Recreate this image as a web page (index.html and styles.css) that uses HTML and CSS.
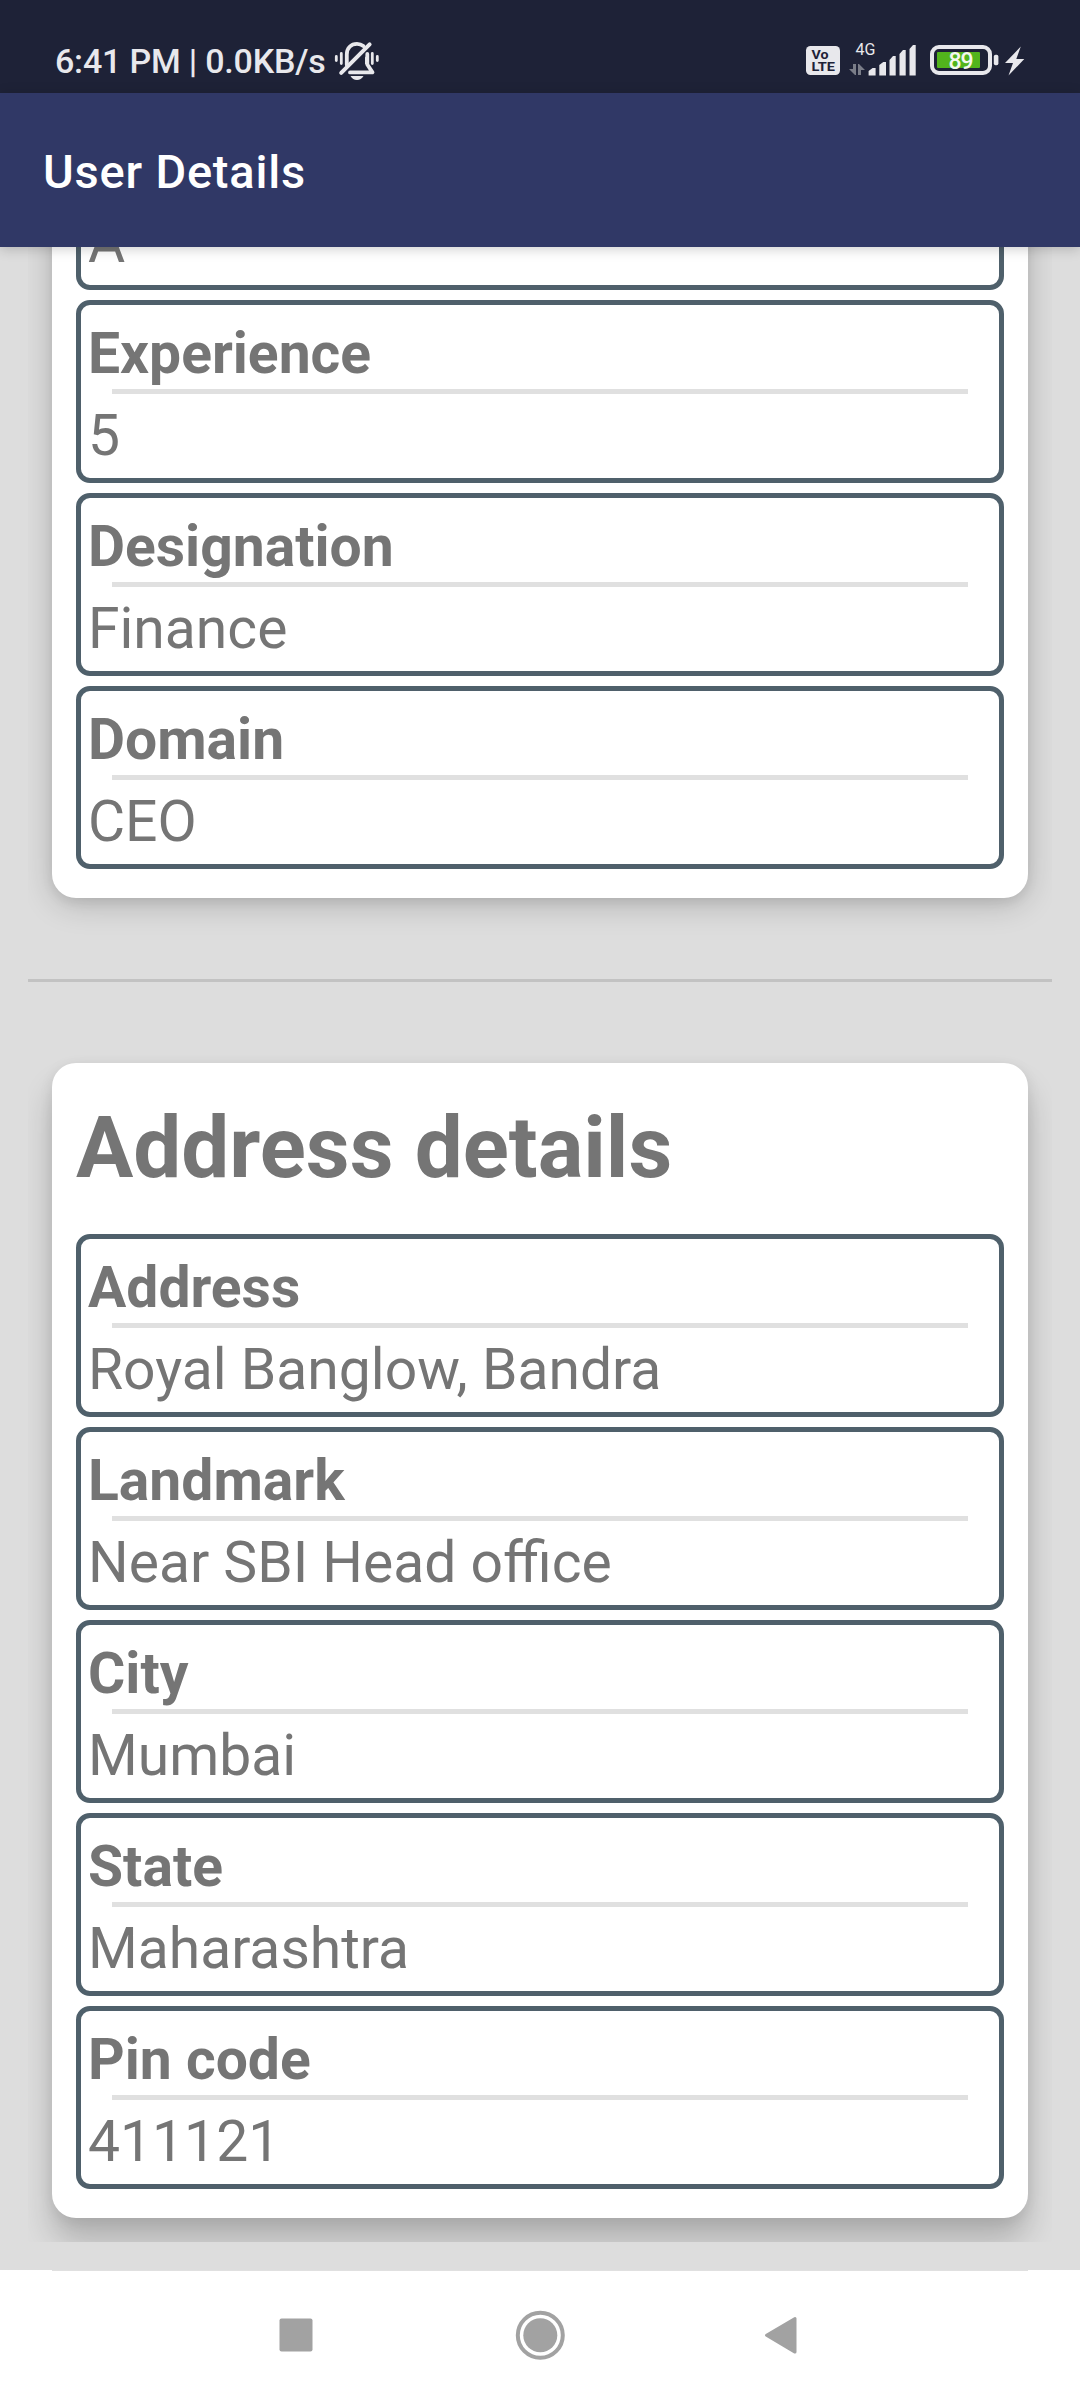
FILE: index.html
```html
<!DOCTYPE html>
<html lang="en">
<head>
<meta charset="utf-8">
<title>User Details</title>
<link rel="stylesheet" href="styles.css">
</head>
<body>
<div class="screen">
  <header class="status">
    <span class="clock">6:41 PM | 0.0KB/s</span>
    <svg class="bell" width="46" height="40" viewBox="0 0 46 40">
      <g fill="none" stroke="#e8e8ec" stroke-linecap="round" stroke-linejoin="round">
        <path stroke-width="2.8" d="M2.3 15.4v4.2M7.3 12.4v10.2M38.3 12.4v10.2M43.3 15.4v4.2"/>
        <path stroke-width="3.8" d="M12.8 24V13.5C12.8 7 17 2.9 23 2.9c2.6 0 4.6.8 6.4 2.2M33.3 13v10.5l5.2 7.9H16"/>
        <path stroke-width="4" d="M7.2 31.8 35.6 3.4"/>
      </g>
      <path fill="#e8e8ec" d="M31 16.5l4-4.500v12l-4-1zM16.500 35h13c-1.500 2.600-3.700 4-6.500 4s-5-1.400-6.500-4z"/>
    </svg>
    <svg class="volte" width="34" height="30" viewBox="0 0 34 30">
      <rect width="34" height="29" rx="4.500" fill="#e8e8ec"/>
      <text class="volte-text" x="5.500" y="12.700" textLength="17" lengthAdjust="spacingAndGlyphs">Vo</text>
      <text class="volte-text" x="5.500" y="25.200" textLength="23.500" lengthAdjust="spacingAndGlyphs">LTE</text>
    </svg>
    <svg class="signal" width="68" height="34" viewBox="0 0 68 34">
      <text class="net" x="6.500" y="12.700" textLength="20">4G</text>
      <path fill="#7a7d88" d="M4 22h3v11h-1L0 27h4zM9 33V22h1l6 6h-4v5z"/>
      <path fill="#e8e8ec" d="M19.600 33.500v-4.500l4-3h3v7.500zM30.300 33.500V23l4-3H37v13.500zM40.500 33.500V18l3.500-4h2.700v19.500zM50.500 33.500V12l3.500-4h2.700v25.500zM60.500 33.500V7l3.500-4h2.700v30.500z"/>
    </svg>
    <svg class="battery" width="69" height="30" viewBox="0 0 69 30">
      <rect x="2" y="2" width="58" height="26" rx="7" fill="none" stroke="#e8e8ec" stroke-width="4"/>
      <rect x="7" y="7" width="43" height="16" rx="1" fill="#52b41c"/>
      <rect x="63.800" y="9.700" width="4.600" height="10.600" rx="1.800" fill="#e8e8ec"/>
      <text class="level" x="18.500" y="24" textLength="25">89</text>
    </svg>
    <svg class="bolt" width="20" height="30" viewBox="0 0 20 30">
      <path fill="#e8e8ec" d="M15.800.500 0 17h8L3.500 29.500 19.300 13h-8z"/>
    </svg>
  </header>

  <div class="appbar"><h1>User Details</h1></div>

  <main class="viewport">
    <div class="content">
      <section class="card">
        <div class="field field-cut"><span class="value">A</span></div>
        <div class="field"><span class="label">Experience</span><hr><span class="value">5</span></div>
        <div class="field"><span class="label">Designation</span><hr><span class="value">Finance</span></div>
        <div class="field"><span class="label">Domain</span><hr><span class="value">CEO</span></div>
      </section>
      <hr class="divider">
      <section class="card card-low">
        <h2>Address details</h2>
        <div class="field"><span class="label">Address</span><hr><span class="value">Royal Banglow, Bandra</span></div>
        <div class="field"><span class="label">Landmark</span><hr><span class="value">Near SBI Head office</span></div>
        <div class="field"><span class="label">City</span><hr><span class="value">Mumbai</span></div>
        <div class="field"><span class="label">State</span><hr><span class="value">Maharashtra</span></div>
        <div class="field"><span class="label">Pin code</span><hr><span class="value">411121</span></div>
      </section>
    </div>
  </main>

  <nav class="navbar">
    <svg width="50" height="50" viewBox="0 0 50 50"><rect x="8.500" y="8.500" width="33" height="33" rx="2" fill="#a2a2a2"/></svg>
    <svg width="50" height="50" viewBox="0 0 50 50"><circle cx="25.300" cy="25.300" r="22.500" fill="none" stroke="#a2a2a2" stroke-width="4"/><circle cx="25.300" cy="25.300" r="17" fill="#a2a2a2"/></svg>
    <svg width="50" height="50" viewBox="0 0 50 50"><path d="M7.500 25.300 36 8.500v33.600z" fill="#a2a2a2" stroke="#a2a2a2" stroke-width="3" stroke-linejoin="round"/></svg>
  </nav>
</div>
</body>
</html>
```
FILE: styles.css
```css
* { box-sizing: border-box; }

body {
  margin: 0;
  font-family: Roboto, "Liberation Sans", sans-serif;
  background: #fff;
}

h1, h2, hr { margin: 0; border: 0; }

.screen {
  width: 1080px;
  height: 2400px;
  display: flex;
  flex-direction: column;
  overflow: hidden;
}

.status {
  height: 93px;
  flex: none;
  display: flex;
  align-items: flex-start;
  padding: 41px 55px 0 55px;
  background: #1e2237;
  color: #e8e8ec;
}

.status svg { overflow: visible; }

.clock {
  font-size: 34px;
  font-weight: 500;
  line-height: 40px;
  letter-spacing: -0.2px;
  white-space: pre;
  width: 279px;
}

.volte { margin: 5px 9px 0 auto; }
.signal { margin: 1px 13px 0 0; }
.battery { margin: 4px 6px 0 0; }
.bolt { margin-top: 5px; }

.volte-text { font-size: 12.500px; font-weight: 700; fill: #1e2237; }
.net { font-size: 16px; fill: #e8e8ec; }
.level { font-size: 23px; font-weight: 500; fill: #f4f8f0; }

.appbar {
  position: relative;
  z-index: 1;
  height: 154px;
  flex: none;
  padding: 51px 43px 0;
  background: #303866;
  box-shadow: 0 2px 12px rgba(0, 0, 0, 0.2);
}

.appbar h1 {
  font-size: 47px;
  font-weight: 500;
  line-height: 56px;
  letter-spacing: 0.8px;
  color: #fff;
}

.viewport {
  height: 2023px;
  flex: none;
  padding: 0 28px 28px;
  background: #ddd;
}

.content {
  height: 1995px;
  padding: 0 24px 24px;
  display: flex;
  flex-direction: column;
  justify-content: flex-end;
  overflow: hidden;
}

.card {
  flex: none;
  display: flex;
  flex-direction: column;
  gap: 10px;
  padding: 24px 24px 29px;
  border-radius: 24px;
  background: #fff;
  box-shadow: 0 6px 32px rgba(0, 0, 0, 0.2), 0 4px 12px rgba(0, 0, 0, 0.07);
}

.card-low {
  padding-top: 35px;
  box-shadow: 0 24px 32px rgba(0, 0, 0, 0.2), 0 3px 14px rgba(0, 0, 0, 0.08);
}

.card h2 {
  height: 126px;
  font-size: 85.300px;
  font-weight: 700;
  line-height: 100px;
  color: #757575;
}

.divider {
  flex: none;
  height: 3px;
  margin: 81px -24px;
  background: #c2c2c2;
}

.field {
  height: 183px;
  display: flex;
  flex-direction: column;
  padding: 15px 7px 0;
  border: 5px solid #4f606b;
  border-radius: 14px;
  font-size: 57px;
  line-height: 67px;
  color: #757575;
}

.field-cut { padding-top: 97px; }

.label { font-weight: 700; }

.field hr {
  flex: none;
  height: 5px;
  margin: 2px 24px 8px;
  background: #e0e0e0;
}

.navbar {
  flex: 1;
  display: flex;
  justify-content: center;
  gap: 194px;
  padding-top: 40px;
  background:
    linear-gradient(#e0e0e0, #e0e0e0) center top / 976px 1px no-repeat #fff;
}
```
